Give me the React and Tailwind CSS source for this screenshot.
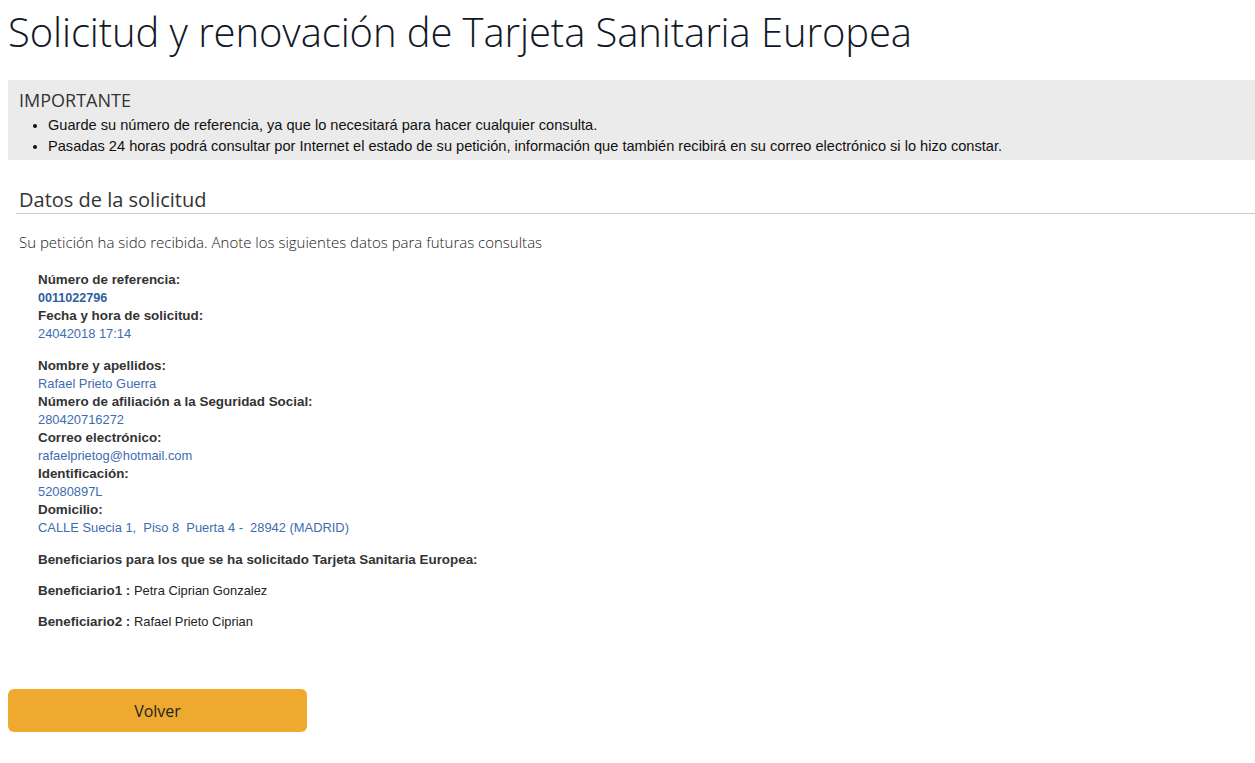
import React from 'react';

const datosSolicitud = [
  { label: 'Número de referencia:', value: '0011022796', strong: true },
  { label: 'Fecha y hora de solicitud:', value: '24042018 17:14' },
];

const datosPersonales = [
  { label: 'Nombre y apellidos:', value: 'Rafael Prieto Guerra' },
  { label: 'Número de afiliación a la Seguridad Social:', value: '280420716272' },
  { label: 'Correo electrónico:', value: 'rafaelprietog@hotmail.com' },
  { label: 'Identificación:', value: '52080897L' },
  { label: 'Domicilio:', value: 'CALLE Suecia 1,\u00a0 Piso 8\u00a0 Puerta 4 -\u00a0 28942 (MADRID)' },
];

const beneficiarios = [
  { label: 'Beneficiario1 :', value: 'Petra Ciprian Gonzalez' },
  { label: 'Beneficiario2 :', value: 'Rafael Prieto Ciprian' },
];

const Campo = ({ label, value, strong }) => (
  <>
    <div className="font-bold text-[13.4px] text-[#333]">{label}</div>
    <div className={strong ? 'font-bold text-[12.6px] text-[#2f5f9f]' : 'text-[12.9px] text-[#3d6cb0]'}>{value}</div>
  </>
);

const App = () => {
  return (
    <div className="bg-white min-h-[763px] pl-2 pb-8 text-[#333]">
      {/* Cabecera */}
      <h1 className="font-['Open_Sans',sans-serif] font-light text-[40px] leading-[48px] pt-[8px] text-[#111827] tracking-[-0.1px]">
        Solicitud y renovación de Tarjeta Sanitaria Europea
      </h1>

      {/* Aviso */}
      <div className="mt-[24px] bg-[#ebebeb] h-[80px] pl-[11px] pt-[9px]">
        <h2 className="font-['Open_Sans',sans-serif] text-[18px] leading-[22px] text-[#333]">IMPORTANTE</h2>
        <ul className="font-['Liberation_Sans',Arial,sans-serif] text-[14.6px] leading-[21px] text-[#111] list-disc pl-[29px] mt-[4px]">
          <li>Guarde su número de referencia, ya que lo necesitará para hacer cualquier consulta.</li>
          <li>Pasadas 24 horas podrá consultar por Internet el estado de su petición, información que también recibirá en su correo electrónico si lo hizo constar.</li>
        </ul>
      </div>

      {/* Datos */}
      <div className="mt-[27px] pl-[8px]">
        <h3 className="font-['Open_Sans',sans-serif] text-[20px] leading-[26px] pl-[3px] border-b border-[#cccccc] text-[#333]">
          Datos de la solicitud
        </h3>
        <p className="font-['Open_Sans',sans-serif] font-light text-[15px] leading-[20px] mt-[18px] pl-[3px] text-[#222]">
          Su petición ha sido recibida. Anote los siguientes datos para futuras consultas
        </p>

        <div className="font-['Liberation_Sans',Arial,sans-serif] text-[13.4px] leading-[18px] pl-[22px] mt-[19px]">
          <div>
            {datosSolicitud.map((d, i) => (
              <Campo key={i} {...d} />
            ))}
          </div>
          <div className="mt-[14px]">
            {datosPersonales.map((d, i) => (
              <Campo key={i} {...d} />
            ))}
          </div>
          <div className="mt-[14px] font-bold text-[#333]">
            Beneficiarios para los que se ha solicitado Tarjeta Sanitaria Europea:
          </div>
          <div className="mt-[13px] flex flex-col gap-[13px]">
            {beneficiarios.map((b, i) => (
              <div key={i} className="text-[#222]">
                <span className="font-bold text-[#333]">{b.label}</span> <span className="text-[12.9px]">{b.value}</span>
              </div>
            ))}
          </div>
        </div>
      </div>

      {/* Botón */}
      <button className="mt-[58px] w-[299px] h-[43px] rounded-[6px] bg-[#eeaa2f] font-['Open_Sans',sans-serif] text-[16px] text-[#222] flex items-center justify-center">
        Volver
      </button>
    </div>
  );
};

export default App;
